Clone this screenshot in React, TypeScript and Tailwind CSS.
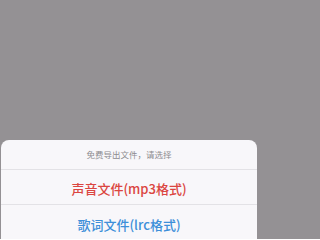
export default function App() {
    return (
        <div className="flex h-[239px] w-full flex-col justify-end overflow-hidden bg-[#949194]"
            style={{ fontFamily: '"Noto Sans CJK SC", "Noto Sans", sans-serif' }}>
            <div className="ml-[1px] h-[99px] w-[256px] overflow-hidden rounded-t-[8px] bg-[#f8f7fa]">
                <div className="flex h-[29px] items-center justify-center text-[8.5px] text-[#8d8c90]">
                    免费导出文件，请选择
                </div>
                <div className="h-px bg-[#e3e2e6]" />
                <button className="flex h-[34px] w-full items-center justify-center pt-[4px] text-[13px] font-medium text-[#db4641]">
                    声音文件(mp3格式)
                </button>
                <div className="h-px bg-[#e3e2e6]" />
                <button className="flex h-[34px] w-full items-center justify-center pt-[6px] text-[13px] font-medium text-[#3d8fd9]">
                    歌词文件(lrc格式)
                </button>
            </div>
        </div>
    );
}
